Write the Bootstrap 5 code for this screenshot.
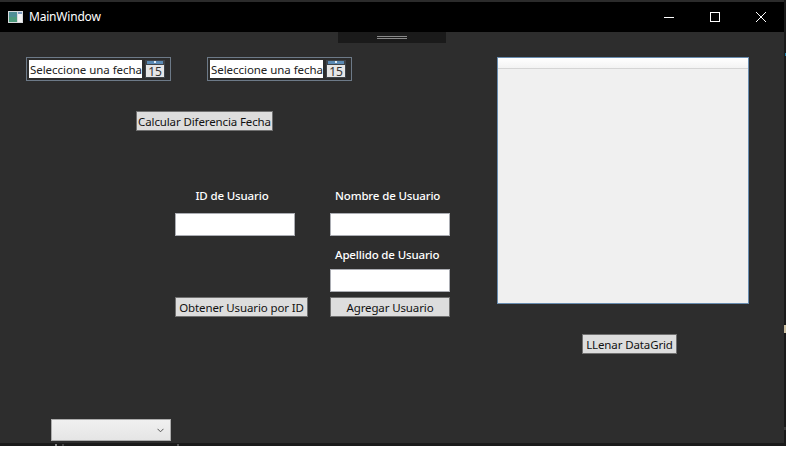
<!DOCTYPE html>
<html lang="en">
<head>
  <meta charset="UTF-8" />
  <title>MainWindow</title>
  <meta name="viewport" content="width=device-width, initial-scale=1" />
  <link href="https://cdn.jsdelivr.net/npm/bootstrap@5.3.0/dist/css/bootstrap.min.css" rel="stylesheet" />
  <style>
    html, body { margin: 0; height: 100%; background: #fff; overflow: hidden; }
    body { font-family: "Noto Sans", "Open Sans", sans-serif; font-size: 11.5px; letter-spacing: -.05px; }

    .win { width: 786px; height: 446px; background: #1a1a1a; }
    .win-body { width: 784px; height: 443px; background: #2d2d2d; }

    /* Title bar */
    .win-title { height: 32px; background: #000; border-top: 2px solid #2b2b2b; color: #fff; padding-left: 8px; }
    .win-title span { margin-left: 6px; font-size: 12px; letter-spacing: -.2px; }
    .win-ctrls { margin-left: auto; }
    .win-ctrl { width: 46px; height: 30px; }

    /* Right edge of the window, with the bits of what lies behind it */
    .win-edge { position: relative; width: 2px; }
    .edge-blue { position: absolute; left: 1px; top: 53px; width: 1px; height: 3px; background: #1d7fa8; }
    .edge-tan { position: absolute; left: 0; top: 325px; width: 2px; height: 8px; background: #c9bd9f; }
    .edge-gray { position: absolute; left: 0; top: 427px; width: 2px; height: 3px; background: #3a3a3a; }

    /* Work area */
    .work { position: relative; height: 411px; }
    .design-strip { position: absolute; left: 338px; top: 0; width: 108px; height: 11px; background: #1a1a1a; }
    .design-strip i { position: absolute; left: 39px; top: 4px; width: 30px; height: 3px; border-top: 1px solid #8a8a8a; border-bottom: 1px solid #8a8a8a; }
    .pane-left { width: 497px; }

    /* Bottom edge */
    .win-foot { position: relative; height: 3px; }
    .foot-mark { position: absolute; top: 1px; height: 2px; }
    .foot-a { left: 55px; width: 2px; background: #8a8a8a; }
    .foot-b { left: 62px; width: 2px; background: #444; }
    .foot-c { left: 177px; width: 2px; background: #555; }

    /* Date pickers */
    .pickers { margin: 25px 0 0 26px; gap: 36px; }
    .picker { width: 145px; height: 24px; border: 1px solid #6d7a88; padding: 2px; gap: 3px; background: #2d2d2d; }
    .picker-text { width: 113px; height: 18px; background: #fff; color: #222; line-height: 19px; padding-left: 1px; white-space: nowrap; overflow: hidden; }

    /* Buttons */
    .wpf-btn { height: 20px; padding: 0; background: #ddd; border: 1px solid #707070; border-radius: 0; color: #111; font-size: 11.5px; letter-spacing: -.12px; line-height: 17px; white-space: nowrap; }
    .btn-calc { width: 137px; margin: 30px 0 0 136px; }
    .btn-fill { width: 95px; margin: 30px 0 0 85px; }

    /* User form */
    .user-form { display: grid; grid-template-columns: 133px 120px; grid-template-rows: 26px 23px 33px 23px 25px; column-gap: 22px; margin: 56px 0 0 175px; }
    .user-form .user-label { color: #fff; font-weight: 500; line-height: 18px; margin: 0; white-space: nowrap; letter-spacing: -.15px; }
    .label-id { grid-column: 1; grid-row: 1; width: 114px; text-align: center; }
    .label-name { grid-column: 2; grid-row: 1; padding-left: 5px; }
    .label-last { grid-column: 2; grid-row: 3; align-self: end; padding: 0 0 5px 5px; }
    .user-form .form-control { width: 120px; height: 23px; min-height: 0; padding: 0 2px; border: 1px solid #abadb3; border-radius: 0; background: #fff; font-size: 12px; }
    .form-id { grid-column: 1; grid-row: 2; }
    .form-name { grid-column: 2; grid-row: 2; }
    .form-last { grid-column: 2; grid-row: 4; }
    .btn-get, .btn-add { grid-row: 5; margin-top: 5px; }
    .btn-get { grid-column: 1; }
    .btn-add { grid-column: 2; }

    /* Combo */
    .combo { width: 120px; height: 22px; margin: 102px 0 0 51px; border: 1px solid #acacac; background: linear-gradient(#f0f0f0, #e5e5e5); padding-right: 6px; }

    /* Data grid */
    .data-grid { width: 252px; height: 247px; margin-top: 25px; border: 1px solid #688caf; background: #f0f0f0; }
    .grid-head { height: 11px; background: linear-gradient(#fff, #f3f3f3); border-bottom: 1px solid #d5d5d5; }
  </style>
</head>
<body>

  <div class="win">
    <div class="d-flex">
      <div class="win-body d-flex flex-column">

        <!-- Title bar -->
        <div class="win-title d-flex align-items-center flex-shrink-0">
          <svg width="15" height="12" viewBox="0 0 15 12">
            <rect width="15" height="12" fill="#d6d9dc"/>
            <rect x="1" y="1" width="8" height="10" fill="#4f8f96"/>
            <rect x="1" y="6" width="8" height="5" fill="#4d9a7c"/>
            <rect x="10" y="1" width="4" height="10" fill="#f2f2f2"/>
            <rect x="10" y="1" width="4" height="2" fill="#7d9cc0"/>
          </svg>
          <span>MainWindow</span>
          <div class="win-ctrls d-flex">
            <div class="win-ctrl d-flex align-items-center justify-content-center">
              <svg width="10" height="10" viewBox="0 0 10 10"><path d="M0 5.5H10" stroke="#fff" fill="none"/></svg>
            </div>
            <div class="win-ctrl d-flex align-items-center justify-content-center">
              <svg width="10" height="10" viewBox="0 0 10 10"><rect x=".5" y=".5" width="9" height="9" stroke="#fff" fill="none"/></svg>
            </div>
            <div class="win-ctrl d-flex align-items-center justify-content-center">
              <svg width="10" height="10" viewBox="0 0 10 10"><path d="M0 0L10 10M10 0L0 10" stroke="#fff" fill="none"/></svg>
            </div>
          </div>
        </div>

        <!-- Work area -->
        <div class="work d-flex">
          <div class="design-strip"><i></i></div>

          <div class="pane-left d-flex flex-column align-items-start">
            <div class="pickers d-flex">
              <div class="picker d-flex">
                <div class="picker-text">Seleccione una fecha</div>
                <svg width="20" height="18" viewBox="0 0 20 18">
                  <rect width="20" height="18" fill="#3f444a"/>
                  <rect x="2" y="1" width="16" height="3" fill="#5a8ab5"/>
                  <rect x="9" y="1" width="2" height="2" fill="#dfeaf5"/>
                  <rect x="1" y="5" width="18" height="12" fill="#e6e6e6"/>
                  <text x="10" y="15.5" font-size="12" text-anchor="middle" fill="#333" font-family="Noto Sans">15</text>
                </svg>
              </div>
              <div class="picker d-flex">
                <div class="picker-text">Seleccione una fecha</div>
                <svg width="20" height="18" viewBox="0 0 20 18">
                  <rect width="20" height="18" fill="#3f444a"/>
                  <rect x="2" y="1" width="16" height="3" fill="#5a8ab5"/>
                  <rect x="9" y="1" width="2" height="2" fill="#dfeaf5"/>
                  <rect x="1" y="5" width="18" height="12" fill="#e6e6e6"/>
                  <text x="10" y="15.5" font-size="12" text-anchor="middle" fill="#333" font-family="Noto Sans">15</text>
                </svg>
              </div>
            </div>

            <button type="button" class="btn wpf-btn btn-calc">Calcular Diferencia Fecha</button>

            <div class="user-form">
              <p class="user-label label-id">ID de Usuario</p>
              <p class="user-label label-name">Nombre de Usuario</p>
              <input class="form-control form-id" type="text" />
              <input class="form-control form-name" type="text" />
              <p class="user-label label-last">Apellido de Usuario</p>
              <input class="form-control form-last" type="text" />
              <button type="button" class="btn wpf-btn btn-get">Obtener Usuario por ID</button>
              <button type="button" class="btn wpf-btn btn-add">Agregar Usuario</button>
            </div>

            <div class="combo d-flex align-items-center justify-content-end">
              <svg width="7" height="5" viewBox="0 0 7 5"><path d="M.5 .8L3.5 3.8L6.5 .8" stroke="#555" fill="none"/></svg>
            </div>
          </div>

          <div class="d-flex flex-column align-items-start">
            <div class="data-grid">
              <div class="grid-head"></div>
            </div>
            <button type="button" class="btn wpf-btn btn-fill">LLenar DataGrid</button>
          </div>
        </div>
      </div>

      <div class="win-edge">
        <div class="edge-blue"></div>
        <div class="edge-tan"></div>
        <div class="edge-gray"></div>
      </div>
    </div>

    <div class="win-foot">
      <div class="foot-mark foot-a"></div>
      <div class="foot-mark foot-b"></div>
      <div class="foot-mark foot-c"></div>
    </div>
  </div>

  <script src="https://cdn.jsdelivr.net/npm/bootstrap@5.3.0/dist/js/bootstrap.bundle.min.js"></script>
</body>
</html>
